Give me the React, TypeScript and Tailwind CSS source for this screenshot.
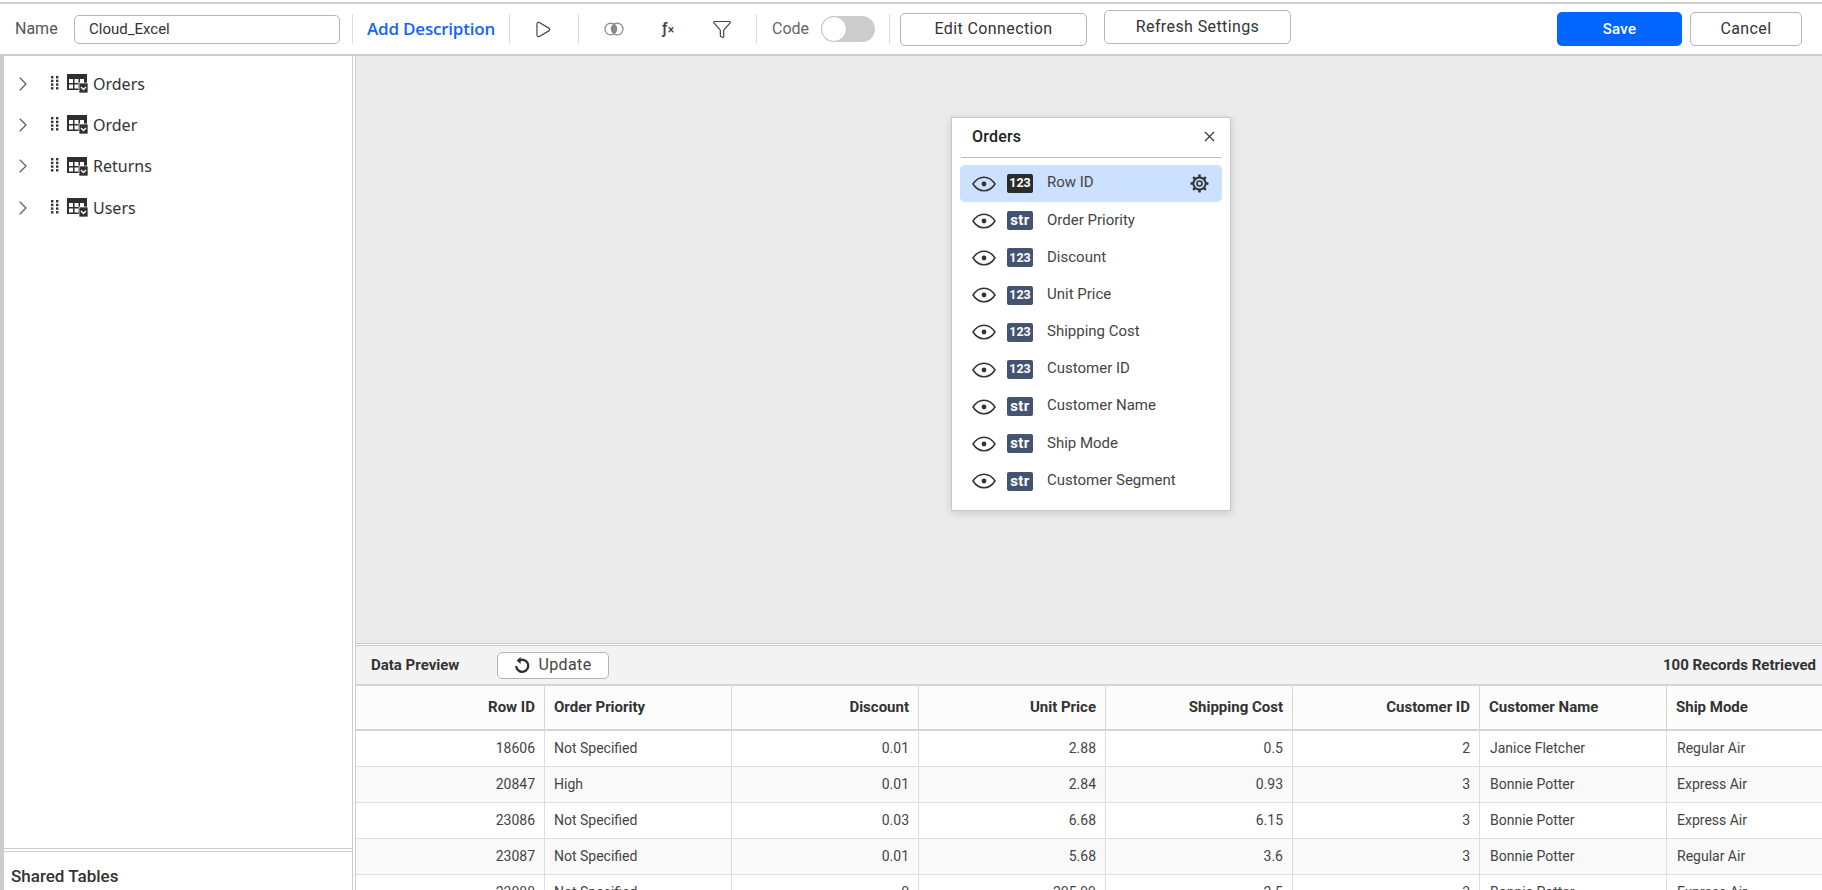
import React from "react";
import { ChevronRight, X, Play, Funnel } from "lucide-react";

const TableIcon = () => (
  <svg width="21" height="19" viewBox="0 0 21 19" className="shrink-0">
    <rect x="0" y="0" width="20" height="16" fill="#2f2f2f" />
    <g fill="#fff">
      <rect x="2" y="5" width="4" height="4" />
      <rect x="7.5" y="5" width="4" height="4" />
      <rect x="13" y="5" width="4" height="4" />
      <rect x="2" y="10.5" width="4" height="4" />
      <rect x="7.5" y="10.5" width="4" height="4" />
    </g>
    <rect x="12" y="9" width="9" height="10" fill="#2f2f2f" stroke="#fff" strokeWidth="0.7" />
    <path d="M14 13l2.5 2.5 2.5-2.5" fill="none" stroke="#fff" strokeWidth="1.4" />
  </svg>
);

const Dots = () => (
  <svg width="8" height="16" viewBox="0 0 8 16" className="shrink-0">
    <g fill="#333">
      {[0, 3.7, 7.4, 11.1].map((y) => (
        <React.Fragment key={y}>
          <rect x="0" y={y} width="2.4" height="2.4" />
          <rect x="5" y={y} width="2.4" height="2.4" />
        </React.Fragment>
      ))}
    </g>
  </svg>
);

const Eye = () => (
  <svg width="24" height="16" viewBox="0 0 24 16" className="shrink-0">
    <path d="M1 8C4 3.4 8 1.2 12 1.2S20 3.4 23 8c-3 4.6-7 6.8-11 6.8S4 12.6 1 8z" fill="none" stroke="#333" strokeWidth="1.5" />
    <circle cx="12" cy="8" r="2.4" fill="#333" />
  </svg>
);

const Gear = () => (
  <svg width="19" height="19" viewBox="0 0 18 18">
    <circle cx="9" cy="9" r="5.8" fill="none" stroke="#333" strokeWidth="1.9" />
    <circle cx="9" cy="9" r="2.4" fill="none" stroke="#333" strokeWidth="1.5" />
    <g stroke="#333" strokeWidth="2.4">
      <path d="M9 0.5v2.4M9 15.1v2.4M0.5 9h2.4M15.1 9h2.4M3 3l1.7 1.7M13.3 13.3L15 15M15 3l-1.7 1.7M4.7 13.3L3 15" />
    </g>
  </svg>
);

const JoinIcon = () => (
  <svg width="20" height="14" viewBox="0 0 20 14">
    <circle cx="6.8" cy="7" r="5.8" fill="none" stroke="#8a8a8a" strokeWidth="1.3" />
    <circle cx="13.2" cy="7" r="5.8" fill="none" stroke="#8a8a8a" strokeWidth="1.3" />
    <path d="M10 2.1a5.8 5.8 0 0 1 0 9.8a5.8 5.8 0 0 1 0-9.8z" fill="#8a8a8a" />
  </svg>
);

const Refresh = () => (
  <svg width="16" height="17" viewBox="0 0 16 17">
    <path d="M5.2 3.6A6 6 0 1 1 2.2 9" fill="none" stroke="#2f2f2f" strokeWidth="2.3" />
    <path d="M6.6 0L6.6 7L2.6 3.5z" fill="#2f2f2f" />
  </svg>
);

const Sep = () => <div className="h-[30px] w-px bg-[#dcdcdc] shrink-0" />;

const btn = "flex items-center justify-center rounded-[5px] border border-[#b5b5b5] bg-white text-[16px] tracking-[0.4px] text-[#333]";

const fields: [string, string][] = [
  ["123", "Row ID"],
  ["str", "Order Priority"],
  ["123", "Discount"],
  ["123", "Unit Price"],
  ["123", "Shipping Cost"],
  ["123", "Customer ID"],
  ["str", "Customer Name"],
  ["str", "Ship Mode"],
  ["str", "Customer Segment"],
];

const cols: { t: string; right: boolean }[] = [
  { t: "Row ID", right: true },
  { t: "Order Priority", right: false },
  { t: "Discount", right: true },
  { t: "Unit Price", right: true },
  { t: "Shipping Cost", right: true },
  { t: "Customer ID", right: true },
  { t: "Customer Name", right: false },
  { t: "Ship Mode", right: false },
];

const rows: string[][] = [
  ["18606", "Not Specified", "0.01", "2.88", "0.5", "2", "Janice Fletcher", "Regular Air"],
  ["20847", "High", "0.01", "2.84", "0.93", "3", "Bonnie Potter", "Express Air"],
  ["23086", "Not Specified", "0.03", "6.68", "6.15", "3", "Bonnie Potter", "Express Air"],
  ["23087", "Not Specified", "0.01", "5.68", "3.6", "3", "Bonnie Potter", "Regular Air"],
  ["23088", "Not Specified", "0", "205.99", "2.5", "3", "Bonnie Potter", "Express Air"],
];

const widthOf = (i: number) => (i === 0 ? "w-[189px]" : "w-[187px]");

export default function App() {
  return (
    <div className="flex h-[890px] w-[1822px] flex-col overflow-hidden bg-white pt-[2px] [font-family:Roboto,sans-serif] text-[#333]">
      <header className="flex h-[54px] shrink-0 items-center border-y-2 border-[#cccccc] bg-white">
        <span className="ml-[15px] w-[59px] text-[16px] text-[#555]">Name</span>
        <div className="flex h-[29px] w-[266px] items-center rounded-[5px] border border-[#b5b5b5] pl-[14px] text-[15px] text-[#333]">Cloud_Excel</div>
        <div className="ml-[12px]"><Sep /></div>
        <span className="ml-[14px] w-[129px] [font-family:'Open_Sans',sans-serif] text-[17px] font-semibold tracking-[-0.2px] whitespace-nowrap text-[#1463ff]">Add Description</span>
        <div className="ml-[13px]"><Sep /></div>
        <Play size={19} strokeWidth={1.5} className="ml-[23px] text-[#444]" />
        <div className="ml-[26px]"><Sep /></div>
        <div className="ml-[25px]"><JoinIcon /></div>
        <span className="ml-[38px] w-[16px] text-[16px] font-medium whitespace-nowrap text-[#444]">ƒ<span className="text-[12px]">×</span></span>
        <Funnel size={20} strokeWidth={1.4} className="ml-[34px] text-[#444]" />
        <div className="ml-[24px]"><Sep /></div>
        <span className="ml-[15px] w-[49px] text-[16px] text-[#666]">Code</span>
        <div className="flex h-[26px] w-[54px] items-center rounded-full bg-[#cccccc]">
          <div className="h-[26px] w-[26px] rounded-full border border-[#c4c4c4] bg-white" />
        </div>
        <div className="ml-[14px]"><Sep /></div>
        <div className={`${btn} ml-[10px] h-[33px] w-[187px]`}>Edit Connection</div>
        <div className={`${btn} ml-[17px] mb-[4px] h-[34px] w-[187px]`}>Refresh Settings</div>
        <div className="flex-1" />
        <div className="flex h-[34px] w-[125px] items-center justify-center rounded-[5px] bg-[#0066ff] text-[15px] font-medium tracking-[0.3px] text-white">Save</div>
        <div className={`${btn} ml-[8px] mr-[20px] h-[34px] w-[112px]`}>Cancel</div>
      </header>

      <div className="flex min-h-0 flex-1">
        <aside className="flex w-[356px] shrink-0 flex-col border-l-2 border-r-[4px] border-[#cccccc] [border-left-width:4px] [border-right-style:double]">
          <div className="flex flex-1 flex-col pt-[7px]">
            {["Orders", "Order", "Returns", "Users"].map((n) => (
              <div key={n} className="flex h-[41.3px] items-center">
                <ChevronRight size={24} strokeWidth={1.1} className="ml-[7px] text-[#555]" />
                <div className="ml-[16px]"><Dots /></div>
                <div className="ml-[8px]"><TableIcon /></div>
                <span className="ml-[5px] [font-family:'Noto_Sans',sans-serif] text-[16px] text-[#333]">{n}</span>
              </div>
            ))}
          </div>
          <div className="h-[42px] border-t-[4px] border-double border-[#cccccc] pl-[7px] pt-[14px] text-[17px] leading-[20px] font-medium text-[#333]">Shared Tables</div>
        </aside>

        <main className="flex min-w-0 flex-1 flex-col">
          <div className="relative flex-1 bg-[#ebebeb]">
            <div className="absolute left-[595px] top-[61px] flex h-[394px] w-[280px] flex-col border border-[#c8c8c8] bg-white shadow-[0_2px_8px_rgba(0,0,0,0.15)]">
              <div className="mx-[9px] flex h-[40px] shrink-0 items-center justify-between border-b border-[#bdbdbd] pb-[2px] pl-[11px] pr-[3px]">
                <span className="text-[16px] font-medium tracking-[0.2px] text-[#222]">Orders</span>
                <X size={17} strokeWidth={1.6} className="text-[#333]" />
              </div>
              <div className="mt-[7px] flex flex-col px-[8px]">
                {fields.map(([k, n], i) => (
                  <div key={n} className={`flex h-[37.2px] items-center rounded-[5px] pl-[12px] ${i === 0 ? "bg-[#cce0ff]" : ""}`}>
                    <Eye />
                    <span className={`ml-[11px] flex h-[19px] w-[26px] items-center justify-center rounded-[2px] leading-none font-bold text-white ${k === "str" ? "text-[15px] tracking-[0.4px]" : "text-[12.5px]"} ${i === 0 ? "bg-[#2b2b2b]" : "bg-[#44536f]"}`}>{k}</span>
                    <span className="ml-[14px] mb-[2px] flex-1 text-[15px] text-[#444]">{n}</span>
                    {i === 0 && <div className="mr-[13px] flex"><Gear /></div>}
                  </div>
                ))}
              </div>
            </div>
          </div>

          <section className="flex h-[247px] shrink-0 flex-col overflow-hidden border-t-[3px] border-double border-[#cccccc]">
            <div className="flex h-[40px] shrink-0 items-center border-b-2 border-[#d4d4d4] bg-[#f3f3f3]">
              <span className="ml-[15px] w-[126px] text-[15px] font-bold text-[#333]">Data Preview</span>
              <div className="flex h-[27px] w-[112px] items-center justify-center gap-[8px] rounded-[5px] border border-[#b5b5b5] bg-white text-[16px] tracking-[0.4px] text-[#444]">
                <Refresh />
                Update
              </div>
              <div className="flex-1" />
              <span className="mr-[6px] text-[15px] font-bold text-[#333]">100 Records Retrieved</span>
            </div>
            <div className="flex h-[45px] shrink-0 border-b-2 border-[#d4d4d4] bg-[#fcfcfc]">
              {cols.map((c, i) => (
                <div key={c.t} className={`flex shrink-0 items-center border-r border-[#d4d4d4] px-[9px] text-[15px] font-bold text-[#333] ${widthOf(i)} ${c.right ? "justify-end" : ""}`}>{c.t}</div>
              ))}
            </div>
            {rows.map((r, ri) => (
              <div key={ri} className={`flex h-[36px] shrink-0 border-b border-[#dedede] ${ri % 2 ? "bg-[#f9f9f9]" : "bg-white"}`}>
                {r.map((v, i) => (
                  <div key={i} className={`flex shrink-0 items-center border-r border-[#dedede] pr-[9px] text-[14px] text-[#444] ${i >= 6 ? "pl-[10px]" : "pl-[9px]"} ${widthOf(i)} ${cols[i].right ? "justify-end" : ""}`}>{v}</div>
                ))}
              </div>
            ))}
          </section>
        </main>
      </div>
    </div>
  );
}
